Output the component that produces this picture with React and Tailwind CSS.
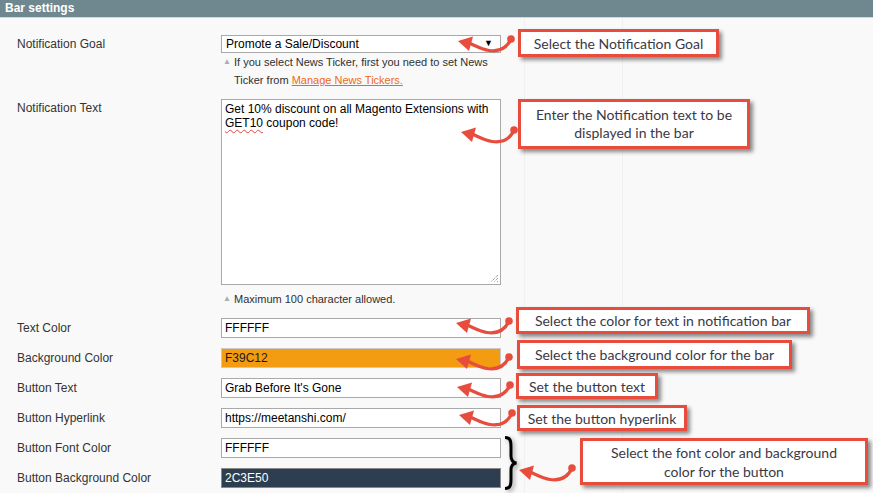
const cols = "grid grid-cols-[221px_303px_98px_1fr]";

function Row({ label, pad, labelLead = "leading-[18px]", h = "", children }) {
  return (
    <div className={`${cols} ${h}`}>
      <div className={`pl-[17px] text-[12px] ${labelLead} text-[#333] ${pad}`}>{label}</div>
      <div className={pad}>{children}</div>
      <div className="border-l border-[#f1f1f1]" />
      <div className="border-l border-[#f1f1f1]" />
    </div>
  );
}

function Field({ value, tone = "bg-white text-black border-[#a9a9a9]" }) {
  return (
    <div className={`w-[280px] h-[20px] border px-[3px] text-[12px] leading-[18px] ${tone}`}>
      {value}
    </div>
  );
}

function Note({ children }) {
  return (
    <div className="flex text-[11px] leading-[18px] text-[#303030]">
      <span className="w-[13px] pl-[2px] text-[8px] text-[#a6adb3]">▲</span>
      <div>{children}</div>
    </div>
  );
}

function Callout({ className, children }) {
  return (
    <div
      className={`absolute flex items-center justify-center border-[3px] border-[#e74c3c] bg-white text-center font-['Lato',sans-serif] text-[14px] text-[#3a3946] shadow-[3px_3px_4px_rgba(0,0,0,0.45)] ${className}`}
    >
      {children}
    </div>
  );
}

function Arrow({ className }) {
  return (
    <svg className={`absolute ${className}`} width="60" height="24" viewBox="0 0 60 24" fill="none">
      <path d="M54,6 C50,15 42,19 32,17.5 C25,16.5 19,13 11,9.5" stroke="#e74c3c" strokeWidth="3.2" strokeLinecap="round" />
      <circle cx="54" cy="6" r="3.8" fill="#e74c3c" />
      <polygon points="1,8 16,3.5 12,18" fill="#e74c3c" />
    </svg>
  );
}

export default function App() {
  return (
    <div className="relative w-[873px] h-[493px] overflow-hidden bg-[#f9f9f9] font-['Liberation_Sans',Arial,sans-serif]">
      <div className="h-[18px] border-b border-[#d6d6d6] bg-[#6f8890] px-[5px] text-[12px] font-bold leading-[17px] text-white">
        Bar settings
      </div>

      <Row label="Notification Goal" pad="pt-[17px]">
        <div className="flex h-[18px] w-[280px] items-center justify-between border border-[#a9a9a9] bg-white pl-[4px] pr-[7px] text-[12px] text-black">
          <span>Promote a Sale/Discount</span>
          <span className="text-[9px]">▼</span>
        </div>
        <Note>
          If you select News Ticker, first you need to set News
          <br />
          Ticker from{" "}
          <span className="text-[#eb6a1a] underline">Manage News Tickers.</span>
        </Note>
      </Row>

      <Row label="Notification Text" pad="pt-[10px]">
        <div className="relative h-[186px] w-[280px] border border-[#a9a9a9] bg-white px-[3px] pt-[2px] text-[12px] leading-[14px] text-black">
          Get 10% discount on all Magento Extensions with
          <br />
          <span className="underline decoration-wavy decoration-[#e0453a] decoration-1 underline-offset-2">GET10</span>{" "}
          coupon code!
          <svg className="absolute right-[1px] bottom-[1px]" width="9" height="9" viewBox="0 0 9 9">
            <path d="M8,1 L1,8 M8,4 L4,8 M8,7 L7,8" stroke="#777" strokeWidth="1" strokeDasharray="1 1" />
          </svg>
        </div>
        <div className="mt-[5px]">
          <Note>Maximum 100 character allowed.</Note>
        </div>
      </Row>

      <Row label="Text Color" pad="pt-[10px]" labelLead="leading-[20px]" h="h-[30px]">
        <Field value="FFFFFF" />
      </Row>
      <Row label="Background Color" pad="pt-[10px]" labelLead="leading-[20px]" h="h-[30px]">
        <Field value="F39C12" tone="bg-[#f39c12] text-[#1a1a1a] border-[#c9c9c9]" />
      </Row>
      <Row label="Button Text" pad="pt-[10px]" labelLead="leading-[20px]" h="h-[30px]">
        <Field value="Grab Before It's Gone" />
      </Row>
      <Row label="Button Hyperlink" pad="pt-[10px]" labelLead="leading-[20px]" h="h-[30px]">
        <Field value="https://meetanshi.com/" />
      </Row>
      <Row label="Button Font Color" pad="pt-[10px]" labelLead="leading-[20px]" h="h-[30px]">
        <Field value="FFFFFF" />
      </Row>
      <Row label="Button Background Color" pad="pt-[10px]" labelLead="leading-[20px]" h="h-[35px]">
        <Field value="2C3E50" tone="bg-[#2c3e50] text-white border-[#8a8a8a]" />
      </Row>

      <Callout className="left-[518px] top-[29px] w-[201px] h-[28px]">Select the Notification Goal</Callout>
      <Callout className="left-[518px] top-[99px] w-[232px] h-[50px] leading-[18px]">
        Enter the Notification text to be
        <br />
        displayed in the bar
      </Callout>
      <Callout className="left-[516px] top-[307px] w-[294px] h-[27px]">Select the color for text in notification bar</Callout>
      <Callout className="left-[517px] top-[340px] w-[275px] h-[29px]">Select the background color for the bar</Callout>
      <Callout className="left-[516px] top-[373px] w-[142px] h-[26px]">Set the button text</Callout>
      <Callout className="left-[517px] top-[405px] w-[170px] h-[26px]">Set the button hyperlink</Callout>
      <Callout className="left-[580px] top-[438px] w-[288px] h-[47px] leading-[19px]">
        Select the font color and background
        <br />
        color for the button
      </Callout>

      <Arrow className="left-[457px] top-[33px]" />
      <Arrow className="left-[460px] top-[124px]" />
      <Arrow className="left-[455px] top-[315px]" />
      <Arrow className="left-[455px] top-[351px]" />
      <Arrow className="left-[456px] top-[379px]" />
      <Arrow className="left-[458px] top-[407px]" />
      <Arrow className="left-[518px] top-[462px]" />

      <svg className="absolute left-[503px] top-[436px] drop-shadow-[2px_2px_2px_rgba(0,0,0,0.35)]" width="16" height="54" viewBox="0 0 16 54" fill="none">
        <path
          d="M2,1.5 C7.5,1.5 8,5 8,11 L8,20 C8,24.5 9.5,26.5 13.5,27 C9.5,27.5 8,29.5 8,34 L8,43 C8,49 7.5,52.5 2,52.5"
          stroke="#000"
          strokeWidth="3"
        />
      </svg>
    </div>
  );
}
